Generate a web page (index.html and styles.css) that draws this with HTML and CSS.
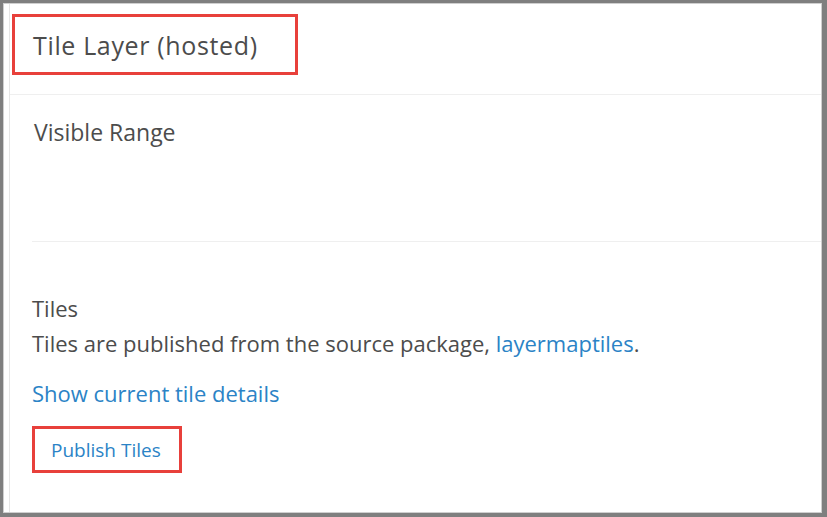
FILE: index.html
```html
<!DOCTYPE html>
<html lang="en">
<head>
<meta charset="utf-8">
<title>Tile Layer (hosted)</title>
<link rel="stylesheet" href="styles.css">
</head>
<body>
<div class="frame">
  <div class="panel">
    <header class="header">
      <h1 class="title">Tile Layer (hosted)</h1>
    </header>
    <section class="section range">
      <h2 class="label range-label">Visible Range</h2>
    </section>
    <section class="section tiles">
      <h2 class="label">Tiles</h2>
      <p class="text">Tiles are published from the source package, <a class="link" href="#">layermaptiles</a>.</p>
      <p class="text details"><a class="link" href="#">Show current tile details</a></p>
      <button class="publish" type="button">Publish Tiles</button>
    </section>
  </div>
</div>
</body>
</html>
```
FILE: styles.css
```css
* { box-sizing: border-box; }
html, body { margin: 0; height: 100%; }
body {
  background: #7f7f7f;
  padding: 3px 5px 4px 3px;
  font-family: "Open Sans", Lato, sans-serif;
  color: #4c4c4c;
}
.frame {
  height: 100%;
  background: #fff;
  border: 1px solid #cfcfcf;
  padding-left: 5px;
  display: flex;
}
.panel {
  flex: 1;
  border-left: 1px solid #e6e6e6;
  display: flex;
  flex-direction: column;
}
.header {
  border-bottom: 1px solid #efefef;
  padding: 10px 0 19px 2px;
}
.title {
  display: inline-block;
  margin: 0;
  width: 286px;
  border: 3px solid #e8403b;
  padding: 16px 0 15px 18px;
  font-size: 25px;
  line-height: 24px;
  letter-spacing: 0.65px;
  font-weight: 400;
}
.section {
  padding-left: 22px;
}
.range {
  height: 147px;
  border-bottom: 1px solid #efefef;
  margin-left: 22px;
  padding-left: 0;
  padding-top: 26px;
}
.label {
  margin: 0;
  font-size: 22px;
  line-height: 22px;
  font-weight: 400;
}
.range-label {
  margin-left: 2px;
  font-size: 23px;
  line-height: 23px;
}
.tiles { padding-top: 55px; }
.text {
  margin: 13px 0 0;
  font-size: 22px;
  line-height: 22px;
}
.details { margin-top: 28px; }
.link {
  color: #2b83c6;
  text-decoration: none;
}
.publish {
  display: block;
  margin-top: 22px;
  width: 150px;
  height: 47px;
  border: 3px solid #e8403b;
  background: #fff;
  padding: 2px 0 0 16px;
  text-align: left;
  font-family: "Open Sans", Lato, sans-serif;
  font-size: 19px;
  line-height: 19px;
  color: #2b83c6;
}
```
